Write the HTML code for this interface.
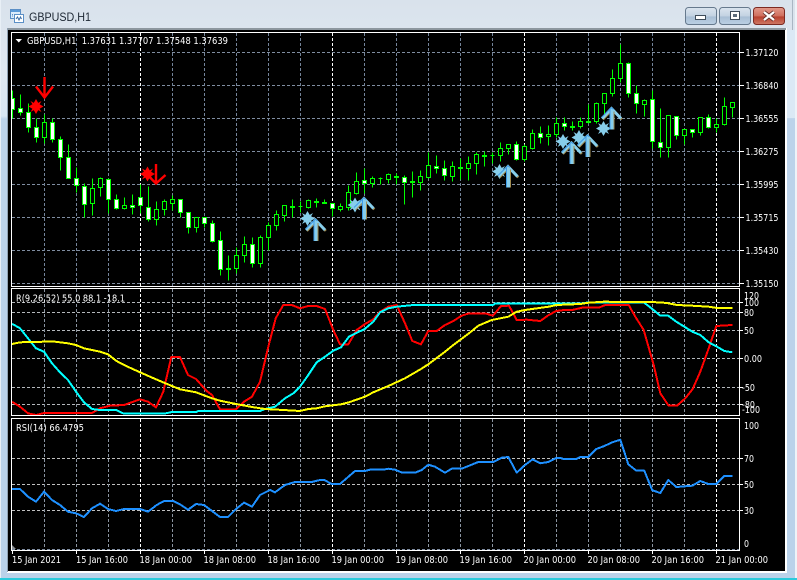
<!DOCTYPE html>
<html><head><meta charset="utf-8"><title>GBPUSD,H1</title>
<style>
html,body{margin:0;padding:0;width:797px;height:580px;overflow:hidden;background:#bcd3ea}
svg{display:block;position:absolute;left:0;top:0}
text{font-family:"DejaVu Sans","Liberation Sans",sans-serif;font-size:9.6px;fill:#fff;white-space:pre}
.ttl{font-family:"Liberation Sans",sans-serif;font-size:12px;fill:#1d2733}
</style></head><body>
<svg width="797" height="580" viewBox="0 0 797 580" xmlns="http://www.w3.org/2000/svg">
<defs>
<linearGradient id="bg" x1="0" y1="0" x2="0" y2="1"><stop offset="0" stop-color="#d9e2ec"/><stop offset=".12" stop-color="#dfe8f1"/><stop offset=".2" stop-color="#d8e6f3"/><stop offset=".205" stop-color="#bcd3ea"/><stop offset="1" stop-color="#bad2ea"/></linearGradient>
<linearGradient id="btn" x1="0" y1="0" x2="0" y2="1"><stop offset="0" stop-color="#dbe5ef"/><stop offset=".5" stop-color="#c3d2e2"/><stop offset=".55" stop-color="#a9bfd5"/><stop offset="1" stop-color="#bcd0e4"/></linearGradient>
<linearGradient id="cls" x1="0" y1="0" x2="0" y2="1"><stop offset="0" stop-color="#e39a8c"/><stop offset=".5" stop-color="#cf6f5e"/><stop offset=".55" stop-color="#b8402e"/><stop offset="1" stop-color="#cf7a66"/></linearGradient>
<clipPath id="p1"><rect x="12" y="33" width="727" height="253"/></clipPath>
<clipPath id="p2"><rect x="12" y="289" width="727" height="126"/></clipPath>
<clipPath id="p3"><rect x="12" y="419" width="727" height="131"/></clipPath>
<polygon id="star" points="0,-7.5 2.2,-3.6 5.5,-5.5 3.6,-2.2 7.5,0 3.6,2.2 5.5,5.5 2.2,3.6 0,7.5 -2.2,3.6 -5.5,5.5 -3.6,2.2 -7.5,0 -3.6,-2.2 -5.5,-5.5 -2.2,-3.6"/>
<g id="up">
<path d="M-9.5 11 L0 1 L9.5 11" fill="none" stroke="#a08a50" stroke-width="2.6" transform="translate(.8,.9)"/>
<path d="M-9.5 11 L0 1 L9.5 11" fill="none" stroke="#87ceeb" stroke-width="3"/>
<path d="M-10 10 L0 .2 L2 2" fill="none" stroke="#3f9be8" stroke-width="1"/>
<rect x="-2" y="2" width="1" height="20" fill="#3f9be8"/>
<rect x="-1" y="2" width="3" height="20" fill="#87ceeb"/>
<rect x="2" y="4" width="1" height="18" fill="#a08a50"/>
</g>
</defs>

<rect width="797" height="580" fill="url(#bg)"/>
<rect x="0" y="0" width="1" height="580" fill="#e8eff6"/>
<rect x="0" y="578" width="797" height="2" fill="#2bcbdc"/>
<rect x="787" y="30" width="8" height="88" fill="#dbe9f5"/>
<rect x="795" y="0" width="2" height="578" fill="#eef3f8"/>
<rect x="792" y="0" width="1" height="30" fill="#a9b6c3"/>
<rect x="7" y="28" width="780" height="545" fill="#fff"/>
<rect x="7" y="28" width="779" height="2" fill="#8d979f"/>
<rect x="7" y="28" width="1" height="544" fill="#8fa1b3"/>
<rect x="8" y="30" width="777" height="541" fill="#000"/>

<!-- title icon -->
<g>
<rect x="10.5" y="9.5" width="10" height="9" fill="#dcecfb" stroke="#5b8fc6"/>
<rect x="14.5" y="14.5" width="9" height="8" fill="#fff" stroke="#5b8fc6"/>
<rect x="11" y="10" width="9" height="2" fill="#5b9ad8"/>
<path d="M16 19l1.5-2 1.5 3 1.5-3 1 2" fill="none" stroke="#3a6ea8" stroke-width="1"/>
<path d="M12 14.5h1M12 16h1" stroke="#5b8fc6"/>
</g>
<text class="ttl" x="29" y="21" textLength="62" lengthAdjust="spacingAndGlyphs">GBPUSD,H1</text>

<!-- window buttons -->
<rect x="685.5" y="7.5" width="31" height="17" rx="3" fill="url(#btn)" stroke="#66798d"/>
<rect x="695.5" y="15.5" width="10" height="4" fill="#fff" stroke="#3e4c5a"/>
<rect x="719.5" y="7.5" width="31" height="17" rx="3" fill="url(#btn)" stroke="#66798d"/>
<rect x="730.5" y="11.5" width="9" height="8" fill="#fff" stroke="#3e4c5a"/>
<rect x="733" y="14" width="4" height="3" fill="#5d6c7b"/>
<rect x="753.5" y="7.5" width="31" height="17" rx="3" fill="url(#cls)" stroke="#7c2a22"/>
<path d="M764 12L774 20M774 12L764 20" stroke="#5a2a26" stroke-width="4"/>
<path d="M764 12L774 20M774 12L764 20" stroke="#fff" stroke-width="2.4"/>

<!-- GRID -->
<g fill="none" stroke-dasharray="3 2" stroke-width="1">
<g clip-path="url(#p1)">
<path stroke="#7f8da0" d="M12 52.5H739M12 85.5H739M12 118.5H739M12 151.5H739M12 184.5H739M12 217.5H739M12 250.5H739M12 283.5H739"/>
<path stroke="#74849a" d="M44.5 33V286M76.5 33V286M108.5 33V286M172.5 33V286M204.5 33V286M236.5 33V286M268.5 33V286M300.5 33V286M364.5 33V286M396.5 33V286M428.5 33V286M460.5 33V286M492.5 33V286M556.5 33V286M588.5 33V286M620.5 33V286M652.5 33V286M684.5 33V286"/>
<path stroke="#fff" d="M140.5 33V286M332.5 33V286M524.5 33V286M716.5 33V286"/>
</g>
<g clip-path="url(#p2)">
<path stroke="#b4b8bc" d="M12 302.5H739M12 312.5H739M12 330.5H739M12 358.5H739M12 387.5H739M12 404.5H739"/>
<path stroke="#8a94a0" d="M44.5 289V415M76.5 289V415M108.5 289V415M172.5 289V415M204.5 289V415M236.5 289V415M268.5 289V415M300.5 289V415M364.5 289V415M396.5 289V415M428.5 289V415M460.5 289V415M492.5 289V415M556.5 289V415M588.5 289V415M620.5 289V415M652.5 289V415M684.5 289V415"/>
<path stroke="#fff" d="M140.5 289V415M332.5 289V415M524.5 289V415M716.5 289V415"/>
</g>
<g clip-path="url(#p3)">
<path stroke="#c0c0c0" d="M12 458.5H739M12 484.5H739M12 510.5H739"/>
<path stroke="#7f8da0" d="M12 549.5H739"/>
<path stroke="#8a94a0" d="M44.5 419V550M76.5 419V550M108.5 419V550M172.5 419V550M204.5 419V550M236.5 419V550M268.5 419V550M300.5 419V550M364.5 419V550M396.5 419V550M428.5 419V550M460.5 419V550M492.5 419V550M556.5 419V550M588.5 419V550M620.5 419V550M652.5 419V550M684.5 419V550"/>
<path stroke="#fff" d="M140.5 419V550M332.5 419V550M524.5 419V550M716.5 419V550"/>
</g>
</g>
<polygon points="12,545 16,549 12,549" fill="#8a8f94"/>

<!-- CANDLES -->
<g clip-path="url(#p1)">
<g transform="translate(.5,.5)" shape-rendering="crispEdges">
<path fill="none" stroke="#00ff00" d="M12 90V118M20 94V115M28 103V132M36 118V142M44 114V143M52 118V142M60 136V170M68 144V178M76 167V192M84 183V217M92 178V215M100 177V196M108 178V213M116 194V209M124 197V209M132 194V214M140 184V213M148 186V221M156 201V225M164 199V215M172 195V210M180 199V217M188 212V233M196 217V232M204 217V227M212 220V242M220 231V275M228 255V280M236 247V273M244 236V262M252 237V267M260 235V267M268 222V250M276 210V230M284 205V221M292 199V217M300 201V212M308 199V208M316 198V207M324 199V203M332 203V216M340 203V211M348 185V210M356 172V194M364 168V193M372 176V187M380 177V184M388 173V183M396 173V184M404 175V204M412 171V197M420 170V190M428 152V178M436 155V173M444 160V180M452 161V181M460 158V179M468 156V180M476 152V174M484 151V166M492 152V163M500 142V161M508 144V154M516 141V160M524 144V161M532 129V149M540 126V143M548 125V145M556 117V137M564 117V130M572 121V130M580 117V128M588 104V123M596 102V123M604 93V118M612 69V96M620 44V82M628 62V97M636 85V113M644 99V116M652 90V148M660 108V157M668 115V157M676 116V139M684 129V144M692 129V137M700 117V135M708 114V128M716 118V132M724 97V125M732 102V117"/>
<path fill="#000" stroke="#00ff00" d="M42 122h4v15h-4zM90 188h4v15h-4zM98 178h4v9h-4zM122 205h4v3h-4zM154 209h4v10h-4zM162 201h4v8h-4zM170 199h4v4h-4zM194 217h4v10h-4zM234 255h4v13h-4zM242 244h4v11h-4zM258 237h4v26h-4zM266 225h4v12h-4zM274 214h4v11h-4zM282 205h4v10h-4zM306 200h4v7h-4zM338 206h4v3h-4zM346 192h4v15h-4zM354 181h4v12h-4zM370 178h4v5h-4zM386 174h4v5h-4zM418 176h4v6h-4zM426 165h4v12h-4zM450 166h4v10h-4zM466 163h4v5h-4zM474 154h4v9h-4zM498 148h4v7h-4zM506 144h4v4h-4zM522 146h4v13h-4zM530 133h4v15h-4zM546 134h4v2h-4zM554 123h4v11h-4zM578 121h4v5h-4zM594 103h4v18h-4zM602 93h4v10h-4zM610 78h4v15h-4zM618 63h4v15h-4zM642 100h4v4h-4zM666 115h4v32h-4zM682 129h4v6h-4zM698 117h4v15h-4zM714 124h4v3h-4zM722 106h4v18h-4zM730 102h4v5h-4z"/>
<path fill="#fff" stroke="#00ff00" d="M10 98h4v11h-4zM18 108h4v4h-4zM26 112h4v15h-4zM34 127h4v10h-4zM50 122h4v17h-4zM58 139h4v18h-4zM66 157h4v21h-4zM74 178h4v7h-4zM82 186h4v18h-4zM106 179h4v20h-4zM114 199h4v9h-4zM130 205h4v2h-4zM138 197h4v8h-4zM146 207h4v12h-4zM178 199h4v13h-4zM186 212h4v15h-4zM202 217h4v6h-4zM210 223h4v18h-4zM218 240h4v29h-4zM250 244h4v19h-4zM330 203h4v5h-4zM362 180h4v3h-4zM402 177h4v5h-4zM434 166h4v2h-4zM442 168h4v7h-4zM514 144h4v15h-4zM538 133h4v4h-4zM562 123h4v3h-4zM626 63h4v30h-4zM634 93h4v10h-4zM650 99h4v42h-4zM658 142h4v5h-4zM674 116h4v19h-4zM690 129h4v3h-4zM706 117h4v10h-4z"/>
<path fill="#00ff00" stroke="#00ff00" d="M226 268h4v1h-4zM290 206h4v1h-4zM314 201h4v1h-4zM322 202h4v1h-4zM394 176h4v1h-4zM410 181h4v1h-4zM458 167h4v1h-4zM482 155h4v1h-4zM570 126h4v1h-4zM586 121h4v1h-4z"/>
<path fill="none" stroke="#00ff00" d="M298 206h4M378 178h4M490 155h4"/>
</g>

<!-- red arrows -->
<g fill="none" stroke="#ff0000" stroke-width="2.4">
<path d="M44.5 77V97M36 86.5L44.5 97.5L53 86.5"/>
<path d="M156 164V184M147.5 175L156 183.5L165.5 175"/>
</g>
<use href="#star" x="36" y="106.5" fill="#ff0000"/>
<use href="#star" x="147.5" y="174" fill="#ff0000"/>

<!-- blue signals -->
<g fill="#87ceeb">
<use href="#star" x="307.5" y="218.5"/>
<use href="#star" x="355" y="205"/>
<use href="#star" x="499.5" y="171.5"/>
<use href="#star" x="563" y="141.5"/>
<use href="#star" x="579" y="137.5"/>
<use href="#star" x="603.5" y="128.5"/>
</g>
<use href="#up" x="315.5" y="219"/>
<use href="#up" x="364" y="197.5"/>
<use href="#up" x="508" y="165.5"/>
<use href="#up" x="571.5" y="142"/>
<use href="#up" x="587.5" y="135"/>
<use href="#up" x="611.5" y="107.5"/>
</g>

<!-- PANE 2 LINES -->
<g clip-path="url(#p2)" fill="none" stroke-width="2" stroke-linejoin="round" shape-rendering="crispEdges">
<path stroke="#ff0000" d="M12 401.7L20 406.7L28 413.3L36 415L44 413L92 413L100 408.3L110 405.7L124 405L140 399.3L148 401.7L156 407.3L163.3 391.7L171.3 357L180 357L188 375L196 379L206.7 391L212 395L220 409.3L236 409.3L244 401.7L252 396.7L260 381.7L268.3 346.7L275.7 318.3L283.3 305L291.7 305L300 308.3L308.3 306L316.7 306L325 309L333.3 330L340 344.3L348.3 344.3L356.7 330L365 324L373.3 319.3L380 311.7L388.3 306.7L396.7 305L405 323.3L412.3 341L421 344.3L428.3 331L436.7 331L445 325L453.3 321L461.7 315.7L469 313.3L485 313.3L493 315.7L501 306L509 305.7L516.7 320L527 319.7L540.3 321L548.7 315L556.3 311L564.3 310L572.3 310L582 307.7L598.7 307.7L605.3 305L628.7 305L635.3 316.7L643.7 330L653.7 365L660.3 393.3L668.7 405.7L677 405.7L685.3 398.3L692.7 389L700.3 371.7L708.7 348.3L716.3 326L732.3 325"/>
<path stroke="#00ffff" d="M12 323.7L20 328.3L28 338.3L36 348.3L44 351.7L52 363.3L60 372.3L68 380L76 391.7L84 402.3L92 409L100 410L116 410L124 413.7L164 413.7L172 412L196 412L198.3 411L260 411L265 409L275 406.7L285 398.3L293.3 393.3L300 386.7L308.3 375L316.7 362.3L325 356.7L333.3 350.7L341 347.3L349 336.7L356.7 332.7L364.3 329.3L373.3 321.7L380 312.3L388.3 308.3L396.7 306.7L413.3 305L493 305L495 303.7L527 303.7L580.3 303.7L588.7 302.3L643.7 302.3L652.3 309L660.3 315.7L668.3 315.7L676.3 321.7L684.3 326.7L692.3 331.7L700.3 335L708.7 342.3L717 346.7L724.3 351L732.3 352.3"/>
<path stroke="#ffff00" d="M12 344L20 342.3L44 341.7L52 341.3L68 343.3L76 345L84 348.3L100 351.7L108 354.3L116 360.7L124 365L140 372.3L156 379.3L164 382.7L172 386L180 389.3L196 392.3L212 398.3L220 400.7L236 404L252 407L265 409L283.3 410L300 411L308.3 409L316.7 408.3L325 406.3L341 404.3L349 402.3L365 396.7L373.3 392.3L389 385.7L405 378.3L421 369L428.3 364.3L445 351.7L453.3 345L469 333.3L478.3 325.7L491.7 320L508.3 316.7L516.7 311.7L525 310L537 308.3L548.7 306.7L556.3 305L580.3 304L588.7 302.7L603.7 301.7L660.3 302.3L668.3 303.3L677 305L692.3 305.7L708.7 306.7L717 308L732.3 308"/>
</g>

<!-- RSI -->
<g clip-path="url(#p3)" fill="none" stroke="#1e90ff" stroke-width="2" stroke-linejoin="round" shape-rendering="crispEdges">
<path d="M12 489L20 489L28 496.7L36 501.7L44 491.7L52 500L60 505L68 511.7L76 513.3L84 517L92 508.3L100 503.7L108 509L116 511L124 509L140 509L148 511.7L156.7 505L164 501L173.3 501L180 504.3L188 509.7L196 504L204 505L220 517L228 517L236 509L244 502.7L252 506.7L260 495L270 490L275 492.3L285 485L295 482L311.7 482L320 480L324.3 480L331.7 484L340 484L355 471L365 471L370 469.7L383.3 469.7L388.3 468.7L395 469.7L402.3 472.7L415 472.7L421.7 470L428.3 464.7L435 466.7L445 472.7L451.7 468.7L461.7 468.7L478.3 462L493.3 462L501.7 457.7L508.3 457L516.7 472.7L525 465L531.7 460L532.3 459.3L540.3 463.3L548.3 462L556.3 458L560.3 458L563.7 459L576.3 459L580.3 457L588.3 457L596.3 449L604.3 446L612.3 442.3L620.3 439.7L628.3 464.3L636.3 470.7L644.3 470.7L652.3 490.3L660.3 493L668.3 480L676.3 487L692.3 485.7L700.3 481L708.3 484L716.3 484L724.3 476L732.3 476"/>
</g>

<!-- BORDERS -->
<g fill="none" stroke="#fff" stroke-width="1" shape-rendering="crispEdges">
<rect x="11.5" y="32.5" width="728" height="254"/>
<rect x="11.5" y="288.5" width="728" height="127"/>
<rect x="11.5" y="418.5" width="728" height="132"/>
<path d="M739 52.5h5M739 85.5h5M739 118.5h5M739 151.5h5M739 184.5h5M739 217.5h5M739 250.5h5M739 283.5h5M739 302.5h4M739 312.5h4M739 330.5h4M739 358.5h4M739 387.5h4M739 404.5h4M739 458.5h4M739 484.5h4M739 510.5h4"/>
<path d="M12.5 551v3M76.5 551v3M140.5 551v3M204.5 551v3M268.5 551v3M332.5 551v3M396.5 551v3M460.5 551v3M524.5 551v3M588.5 551v3M652.5 551v3M716.5 551v3"/>
</g>
<path d="M15.5 39h6.5l-3.2 3.5z" fill="#fff"/>

<!-- TEXT -->
<text x="27" y="44" textLength="201" lengthAdjust="spacingAndGlyphs">GBPUSD,H1  1.37631 1.37707 1.37548 1.37639</text>
<text x="16" y="301.5" textLength="109" lengthAdjust="spacingAndGlyphs">R(9,26,52) 55.0 88.1 -18.1</text>
<text x="16" y="431" textLength="68" lengthAdjust="spacingAndGlyphs">RSI(14) 66.4795</text>

<g>
<text x="745.5" y="56" textLength="33" lengthAdjust="spacingAndGlyphs">1.37120</text>
<text x="745.5" y="89" textLength="33" lengthAdjust="spacingAndGlyphs">1.36840</text>
<text x="745.5" y="122" textLength="33" lengthAdjust="spacingAndGlyphs">1.36555</text>
<text x="745.5" y="155" textLength="33" lengthAdjust="spacingAndGlyphs">1.36275</text>
<text x="745.5" y="188" textLength="33" lengthAdjust="spacingAndGlyphs">1.35995</text>
<text x="745.5" y="221" textLength="33" lengthAdjust="spacingAndGlyphs">1.35715</text>
<text x="745.5" y="254" textLength="33" lengthAdjust="spacingAndGlyphs">1.35430</text>
<text x="745.5" y="287" textLength="33" lengthAdjust="spacingAndGlyphs">1.35150</text>
<text x="744" y="299" textLength="15" lengthAdjust="spacingAndGlyphs">120</text>
<text x="744" y="306" textLength="15" lengthAdjust="spacingAndGlyphs">100</text>
<text x="744" y="316" textLength="10" lengthAdjust="spacingAndGlyphs">80</text>
<text x="744" y="334" textLength="10" lengthAdjust="spacingAndGlyphs">50</text>
<text x="744" y="362" textLength="18" lengthAdjust="spacingAndGlyphs">0.00</text>
<text x="742" y="391" textLength="13" lengthAdjust="spacingAndGlyphs">-50</text>
<text x="742" y="408" textLength="13" lengthAdjust="spacingAndGlyphs">-80</text>
<text x="742" y="413" textLength="18" lengthAdjust="spacingAndGlyphs">-100</text>
<text x="744" y="429" textLength="15" lengthAdjust="spacingAndGlyphs">100</text>
<text x="744" y="462" textLength="10" lengthAdjust="spacingAndGlyphs">70</text>
<text x="744" y="488" textLength="10" lengthAdjust="spacingAndGlyphs">50</text>
<text x="744" y="514" textLength="10" lengthAdjust="spacingAndGlyphs">30</text>
<text x="744" y="547" textLength="5" lengthAdjust="spacingAndGlyphs">0</text>
</g>

<g>
<text x="12" y="563" textLength="49" lengthAdjust="spacingAndGlyphs">15 Jan 2021</text>
<text x="76" y="563" textLength="52" lengthAdjust="spacingAndGlyphs">15 Jan 16:00</text>
<text x="139.5" y="563" textLength="52.5" lengthAdjust="spacingAndGlyphs">18 Jan 00:00</text>
<text x="203.5" y="563" textLength="52.5" lengthAdjust="spacingAndGlyphs">18 Jan 08:00</text>
<text x="267.5" y="563" textLength="52.5" lengthAdjust="spacingAndGlyphs">18 Jan 16:00</text>
<text x="331.5" y="563" textLength="52.5" lengthAdjust="spacingAndGlyphs">19 Jan 00:00</text>
<text x="395.5" y="563" textLength="52.5" lengthAdjust="spacingAndGlyphs">19 Jan 08:00</text>
<text x="459.5" y="563" textLength="52.5" lengthAdjust="spacingAndGlyphs">19 Jan 16:00</text>
<text x="523.5" y="563" textLength="52.5" lengthAdjust="spacingAndGlyphs">20 Jan 00:00</text>
<text x="587.5" y="563" textLength="52.5" lengthAdjust="spacingAndGlyphs">20 Jan 08:00</text>
<text x="651.5" y="563" textLength="52.5" lengthAdjust="spacingAndGlyphs">20 Jan 16:00</text>
<text x="715.5" y="563" textLength="52.5" lengthAdjust="spacingAndGlyphs">21 Jan 00:00</text>
</g>
</svg>
</body></html>
